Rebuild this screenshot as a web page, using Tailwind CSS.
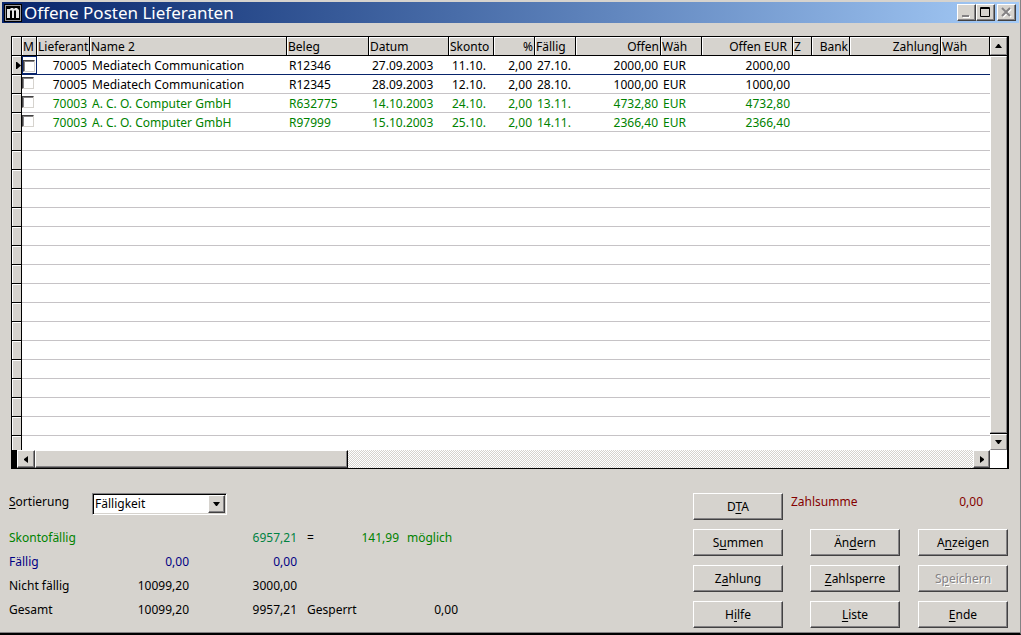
<!DOCTYPE html>
<html lang="de">
<head>
<meta charset="utf-8">
<title>Offene Posten Lieferanten</title>
<script src="https://cdn.jsdelivr.net/npm/@tailwindcss/browser@4"></script>
</head>
<body class="bg-[#d6d3ce] text-black text-[12px] leading-[18px] font-['Noto_Sans','DejaVu_Sans',sans-serif]">
<div class="min-h-screen flex flex-col border-r border-r-[#848284] border-b-2 border-b-black">
<div class="grow flex flex-col pt-[2px] border-b border-[#848284]">

<!-- Title bar -->
<header class="ml-[2px] mr-px h-[21px] flex items-center pl-[2px] pr-[3px] bg-linear-to-r from-[#08246b] to-[#a5cbf7]">
  <svg class="w-[18px] h-[18px] shrink-0" viewBox="0 0 18 18" aria-hidden="true"><rect width="18" height="18" fill="#000"/><rect x="1.500" y="1.500" width="15" height="15" fill="#000" stroke="#9c9a9c"/><path d="M3 5h3l1-1h2l1 1 1-1h2l2 2v8h-3V7l-1-1-1 1v7H8V7L7 6 6 7v7H3z" fill="#e7e7e7"/></svg>
  <h1 class="ml-[2px] grow text-white text-[17px] leading-[21px] whitespace-nowrap">Offene Posten Lieferanten</h1>
  <button aria-label="Minimieren" class="w-[19px] h-[17px] bg-[#d6d3ce] border border-t-white border-l-white border-r-[#424142] border-b-[#424142] shadow-[inset_-1px_-1px_#848284]"><svg class="w-[17px] h-[15px]" viewBox="0 0 17 15"><path d="M5 12h7" stroke="#fff" stroke-width="2"/><path d="M4 11h7" stroke="#848284" stroke-width="2"/></svg></button>
  <button aria-label="Maximieren" class="w-[19px] h-[17px] bg-[#d6d3ce] border border-t-white border-l-white border-r-[#424142] border-b-[#424142] shadow-[inset_-1px_-1px_#848284]"><svg class="w-[17px] h-[15px]" viewBox="0 0 17 15"><path d="M3.500 2.500h9v9h-9zM3 3.500h10" fill="none" stroke="#000"/></svg></button>
  <button aria-label="Schließen" class="ml-[2px] w-[19px] h-[17px] bg-[#d6d3ce] border border-t-white border-l-white border-r-[#424142] border-b-[#424142] shadow-[inset_-1px_-1px_#848284]"><svg class="w-[17px] h-[15px]" viewBox="0 0 17 15"><path d="M5 4l8 8M13 4l-8 8" stroke="#fff" stroke-width="2"/><path d="M4 3l8 8M12 3l-8 8" stroke="#848284" stroke-width="2"/></svg></button>
</header>

<!-- Open items grid -->
<main class="mt-[13px] ml-[11px] mr-[11px] border border-r-2 border-black bg-white">
 <div class="flex">
  <table class="grow w-0 table-fixed border-separate border-spacing-0 whitespace-nowrap [&_tr]:h-[19px] [&_td]:h-[19px] [&_th]:h-[19px] [&_th]:pb-0 [&_th]:pt-[2px] [&_th]:leading-[16px] [&_td>div]:pt-[2px] [&_td>div]:leading-[16px] [&_th]:px-px [&_th]:font-normal [&_th]:text-left [&_th]:bg-[#d6d3ce] [&_th]:border-b [&_th]:border-r [&_th]:border-black [&_th]:shadow-[inset_1px_1px_#fff] [&_td]:p-0 [&_td]:border-b [&_td]:border-[#c6c3c6] [&_td:first-child]:bg-[#d6d3ce] [&_td:first-child]:border-r [&_td:first-child]:border-black [&_td:first-child]:shadow-[inset_1px_1px_#fff]">
   <colgroup><col class="w-[10px]"><col class="w-[15px]"><col class="w-[53px]"><col class="w-[197px]"><col class="w-[82px]"><col class="w-[80px]"><col class="w-[45px]"><col class="w-[41px]"><col class="w-[41px]"><col class="w-[85px]"><col class="w-[41px]"><col class="w-[91px]"><col class="w-[19px]"><col class="w-[38px]"><col class="w-[91px]"><col></colgroup>
   <thead><tr><th></th><th>M</th><th>Lieferant</th><th>Name 2</th><th>Beleg</th><th>Datum</th><th>Skonto</th><th><div class="text-right">%</div></th><th>Fällig</th><th><div class="text-right">Offen</div></th><th>Wäh</th><th><div class="text-right pr-1">Offen EUR</div></th><th>Z</th><th><div class="text-right">Bank</div></th><th><div class="text-right">Zahlung</div></th><th>Wäh</th></tr></thead>
   <tbody>
    <tr class="[&>td:not(:first-child)]:border-[#08246b]"><td><svg class="w-[5px] h-[7px] ml-1" viewBox="0 0 5 7"><path d="M0 0h1l4 3.500L1 7H0z"/></svg></td><td><div class="w-[15px] h-[18px] flex items-center border border-[#08246b]"><input type="checkbox" aria-label="70005 R12346" class="block appearance-none size-[12px] bg-white border border-t-[#424142] border-l-[#424142] border-r-[#d6d3ce] border-b-[#d6d3ce] shadow-[inset_1px_1px_#848284]"></div></td><td><div class="text-right pr-[3px]">70005</div></td><td><div class="pl-[2px]">Mediatech Communication</div></td><td><div class="pl-[2px]">R12346</div></td><td><div class="pl-[3px]">27.09.2003</div></td><td><div class="pl-[3px]">11.10.</div></td><td><div class="text-right pr-[3px]">2,00</div></td><td><div class="pl-[2px]">27.10.</div></td><td><div class="text-right pr-[3px]">2000,00</div></td><td><div class="pl-[2px]">EUR</div></td><td><div class="text-right pr-[3px]">2000,00</div></td><td></td><td></td><td></td><td></td></tr>
    <tr><td></td><td><input type="checkbox" aria-label="70005 R12345" class="block mb-[3px] appearance-none size-[12px] bg-white border border-t-[#424142] border-l-[#424142] border-r-[#d6d3ce] border-b-[#d6d3ce] shadow-[inset_1px_1px_#848284]"></td><td><div class="text-right pr-[3px]">70005</div></td><td><div class="pl-[2px]">Mediatech Communication</div></td><td><div class="pl-[2px]">R12345</div></td><td><div class="pl-[3px]">28.09.2003</div></td><td><div class="pl-[3px]">12.10.</div></td><td><div class="text-right pr-[3px]">2,00</div></td><td><div class="pl-[2px]">28.10.</div></td><td><div class="text-right pr-[3px]">1000,00</div></td><td><div class="pl-[2px]">EUR</div></td><td><div class="text-right pr-[3px]">1000,00</div></td><td></td><td></td><td></td><td></td></tr>
    <tr class="text-[#008200]"><td></td><td><input type="checkbox" aria-label="70003 R632775" class="block mb-[3px] appearance-none size-[12px] bg-white border border-t-[#424142] border-l-[#424142] border-r-[#d6d3ce] border-b-[#d6d3ce] shadow-[inset_1px_1px_#848284]"></td><td><div class="text-right pr-[3px]">70003</div></td><td><div class="pl-[2px]">A. C. O. Computer GmbH</div></td><td><div class="pl-[2px]">R632775</div></td><td><div class="pl-[3px]">14.10.2003</div></td><td><div class="pl-[3px]">24.10.</div></td><td><div class="text-right pr-[3px]">2,00</div></td><td><div class="pl-[2px]">13.11.</div></td><td><div class="text-right pr-[3px]">4732,80</div></td><td><div class="pl-[2px]">EUR</div></td><td><div class="text-right pr-[3px]">4732,80</div></td><td></td><td></td><td></td><td></td></tr>
    <tr class="text-[#008200]"><td></td><td><input type="checkbox" aria-label="70003 R97999" class="block mb-[3px] appearance-none size-[12px] bg-white border border-t-[#424142] border-l-[#424142] border-r-[#d6d3ce] border-b-[#d6d3ce] shadow-[inset_1px_1px_#848284]"></td><td><div class="text-right pr-[3px]">70003</div></td><td><div class="pl-[2px]">A. C. O. Computer GmbH</div></td><td><div class="pl-[2px]">R97999</div></td><td><div class="pl-[3px]">15.10.2003</div></td><td><div class="pl-[3px]">25.10.</div></td><td><div class="text-right pr-[3px]">2,00</div></td><td><div class="pl-[2px]">14.11.</div></td><td><div class="text-right pr-[3px]">2366,40</div></td><td><div class="pl-[2px]">EUR</div></td><td><div class="text-right pr-[3px]">2366,40</div></td><td></td><td></td><td></td><td></td></tr>
    <tr><td></td><td colspan="15"></td></tr>
    <tr><td></td><td colspan="15"></td></tr>
    <tr><td></td><td colspan="15"></td></tr>
    <tr><td></td><td colspan="15"></td></tr>
    <tr><td></td><td colspan="15"></td></tr>
    <tr><td></td><td colspan="15"></td></tr>
    <tr><td></td><td colspan="15"></td></tr>
    <tr><td></td><td colspan="15"></td></tr>
    <tr><td></td><td colspan="15"></td></tr>
    <tr><td></td><td colspan="15"></td></tr>
    <tr><td></td><td colspan="15"></td></tr>
    <tr><td></td><td colspan="15"></td></tr>
    <tr><td></td><td colspan="15"></td></tr>
    <tr><td></td><td colspan="15"></td></tr>
    <tr><td></td><td colspan="15"></td></tr>
    <tr><td></td><td colspan="15"></td></tr>
    <tr class="h-[14px]! [&>td]:h-[14px]! [&>td]:border-b-0!"><td></td><td colspan="15"></td></tr>
   </tbody>
  </table>
  <div class="w-[17px] shrink-0 flex flex-col bg-[#d6d3ce]">
   <button aria-label="Nach oben" class="h-[18px] flex items-center justify-center border border-t-white border-l-white border-r-[#848284] border-b-[#848284]"><svg class="w-[7px] h-[4px]" viewBox="0 0 7 4"><path d="M3 0h1l3 4H0z"/></svg></button>
   <div class="grow border-y border-y-black flex"><div class="grow border border-t-white border-l-white border-r-[#848284] border-b-[#848284]"></div></div>
   <button aria-label="Nach unten" class="h-[16px] flex items-center justify-center border border-t-white border-l-white border-r-[#848284] border-b-[#848284]"><svg class="w-[7px] h-[4px]" viewBox="0 0 7 4"><path d="M3 4h1l3-4H0z"/></svg></button>
  </div>
 </div>
 <div class="h-[18px] flex">
  <div class="w-[5px] bg-black"></div>
  <button aria-label="Nach links" class="w-[18px] flex items-center justify-center bg-[#d6d3ce] border border-t-white border-l-white border-r-[#424142] border-b-[#424142] shadow-[inset_-1px_-1px_#848284]"><svg class="w-[4px] h-[7px]" viewBox="0 0 4 7"><path d="M4 0v7L0 4V3z"/></svg></button>
  <div class="w-[313px] bg-[#d6d3ce] border border-t-white border-l-white border-r-black border-b-[#424142] shadow-[inset_-1px_-1px_#848284]"></div>
  <div class="grow bg-[repeating-conic-gradient(#d6d3ce_0_25%,#fff_0_50%)] bg-size-[2px_2px]"></div>
  <button aria-label="Nach rechts" class="w-[17px] flex items-center justify-center bg-[#d6d3ce] border border-t-white border-l-white border-r-[#424142] border-b-[#424142] shadow-[inset_-1px_-1px_#848284]"><svg class="w-[4px] h-[7px]" viewBox="0 0 4 7"><path d="M0 0v7L4 4V3z"/></svg></button>
  <div class="w-[17px] bg-white"></div>
 </div>
</main>

<!-- Sorting, totals and actions -->
<footer class="flex justify-between pl-[9px] pr-[12px] pt-6 pb-1">
 <section>
  <div class="flex items-start h-[33px]">
   <label for="sort" class="w-[83px]"><u class="underline-offset-2">S</u>ortierung</label>
   <div class="relative">
    <select id="sort" class="block appearance-none w-[135px] h-[22px] pl-[2px] bg-white border border-t-[#848284] border-l-[#848284] border-r-white border-b-white shadow-[inset_1px_1px_#000,inset_-1px_-1px_#d6d3ce]"><option>Fälligkeit</option></select>
    <span class="absolute right-[2px] top-[2px] w-[17px] h-[18px] pointer-events-none flex items-center justify-center bg-[#d6d3ce] border border-t-white border-l-white border-r-[#424142] border-b-[#424142] shadow-[inset_-1px_-1px_#848284]"><svg class="w-[7px] h-[4px]" viewBox="0 0 7 4"><path d="M3 4h1l3-4H0z"/></svg></span>
   </div>
  </div>
  <div class="grid grid-cols-[80px_100px_108px_62px_40px_59px] auto-rows-[24px] leading-[24px] whitespace-nowrap [&>:nth-child(6n+2)]:text-right [&>:nth-child(6n+3)]:text-right [&>:nth-child(6n+4)]:pl-[10px] [&>:nth-child(6n+5)]:text-right">
   <span class="text-[#008200]">Skontofällig</span><span></span><span class="text-[#008242]">6957,21</span><span>=</span><span class="text-[#008200]">141,99</span><span class="text-[#008200] pl-2">möglich</span>
   <span class="text-[#000084]">Fällig</span><span class="text-[#000084]">0,00</span><span class="text-[#000084]">0,00</span><span></span><span></span><span></span>
   <span>Nicht fällig</span><span>10099,20</span><span>3000,00</span><span></span><span></span><span></span>
   <span>Gesamt</span><span>10099,20</span><span>9957,21</span><span>Gesperrt</span><span></span><span class="text-right">0,00</span>
  </div>
 </section>
 <section class="grid grid-cols-[90px_90px_90px] auto-rows-[27px] gap-y-[9px] gap-x-[18px] [&>:nth-child(3n+1)]:-ml-[9px] [&_button]:w-[90px] [&_button]:border [&_button]:border-t-white [&_button]:border-l-white [&_button]:border-r-[#424142] [&_button]:border-b-[#424142] [&_button]:shadow-[inset_-1px_-1px_#848284] [&_u]:underline-offset-2">
  <button>D<u>T</u>A</button>
  <span class="text-[#840000] -ml-[19px]">Zahlsumme</span>
  <span class="text-[#840000] text-right pr-[25px]">0,00</span>
  <button>S<u>u</u>mmen</button><button>Än<u>d</u>ern</button><button>A<u>n</u>zeigen</button>
  <button>Z<u>a</u>hlung</button><button><u>Z</u>ahlsperre</button><button disabled class="text-[#848284] text-shadow-[1px_1px_#fff]">S<u>p</u>eichern</button>
  <button>H<u>i</u>lfe</button><button><u>L</u>iste</button><button><u>E</u>nde</button>
 </section>
</footer>
</div>
</div>
</body>
</html>
